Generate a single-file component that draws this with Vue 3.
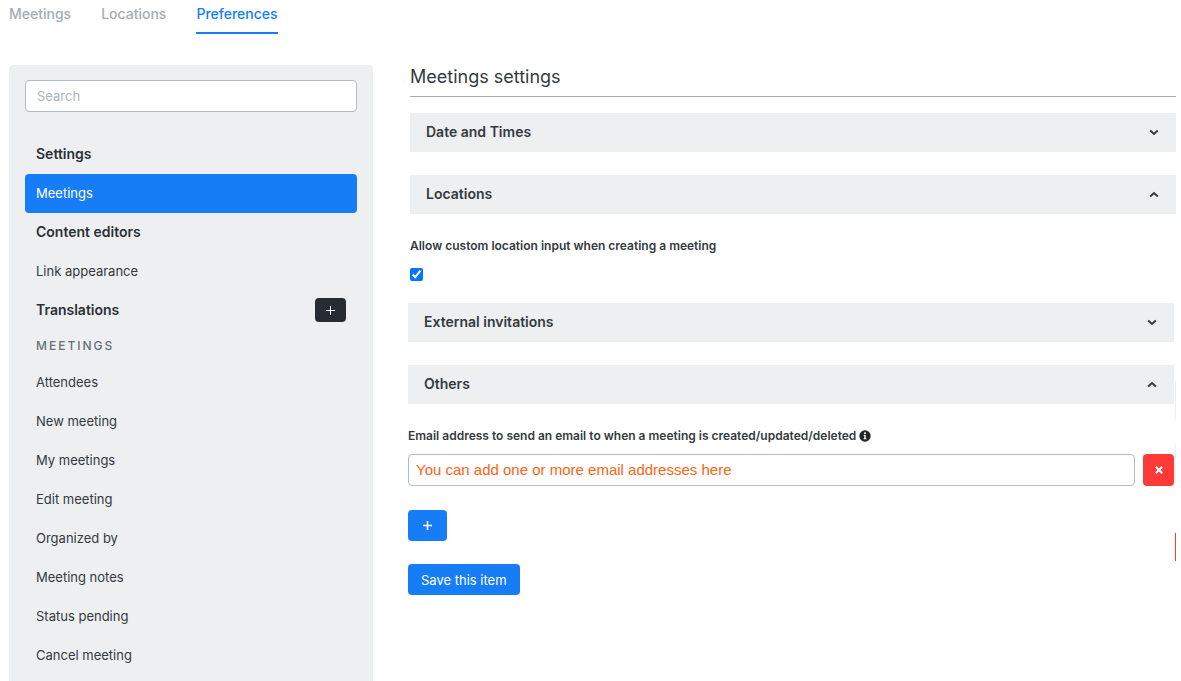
<script setup>
import { ref } from 'vue'

const tabs = ['Meetings', 'Locations', 'Preferences']
const activeTab = ref('Preferences')
const activeItem = ref('Meetings')
const search = ref('')
const allowCustom = ref(true)
const email = ref('You can add one or more email addresses here')
const open = ref({ dates: false, locations: true, external: false, others: true })

const menu = [
  { type: 'title', label: 'Settings' },
  { type: 'link', label: 'Meetings' },
  { type: 'title', label: 'Content editors' },
  { type: 'link', label: 'Link appearance' },
  { type: 'title', label: 'Translations', add: true },
  { type: 'caption', label: 'MEETINGS' },
  { type: 'link', label: 'Attendees' },
  { type: 'link', label: 'New meeting' },
  { type: 'link', label: 'My meetings' },
  { type: 'link', label: 'Edit meeting' },
  { type: 'link', label: 'Organized by' },
  { type: 'link', label: 'Meeting notes' },
  { type: 'link', label: 'Status pending' },
  { type: 'link', label: 'Cancel meeting' },
]
</script>

<template>
  <div class="page">
    <nav class="tabs">
      <a
        v-for="tab in tabs"
        :key="tab"
        href="#"
        :class="['tab', { active: tab === activeTab }]"
        @click.prevent="activeTab = tab"
      >{{ tab }}</a>
    </nav>

    <div class="columns">
      <aside class="sidebar">
        <input v-model="search" class="search" type="search" placeholder="Search" aria-label="Search">
        <div class="menu">
          <template v-for="item in menu" :key="item.type + item.label">
            <div v-if="item.type === 'title'" class="row title">
              <span>{{ item.label }}</span>
              <button v-if="item.add" class="add-small" type="button" aria-label="Add translation">
                <svg width="9" height="9" viewBox="0 0 9 9"><path d="M4.5 0v9M0 4.5h9" /></svg>
              </button>
            </div>
            <div v-else-if="item.type === 'caption'" class="caption">{{ item.label }}</div>
            <a
              v-else
              href="#"
              :class="['row', { selected: item.label === activeItem }]"
              @click.prevent="activeItem = item.label"
            >{{ item.label }}</a>
          </template>
        </div>
      </aside>

      <main class="content">
        <section class="upper">
          <h1>Meetings settings</h1>
          <button class="bar" type="button" :aria-expanded="open.dates" @click="open.dates = !open.dates">
            <span>Date and Times</span>
            <svg :class="['chevron', { up: open.dates }]" width="10" height="7" viewBox="0 0 10 7"><path d="M1.2 1.5L5 5l3.8-3.5" /></svg>
          </button>
          <button class="bar" type="button" :aria-expanded="open.locations" @click="open.locations = !open.locations">
            <span>Locations</span>
            <svg :class="['chevron', { up: open.locations }]" width="10" height="7" viewBox="0 0 10 7"><path d="M1.2 1.5L5 5l3.8-3.5" /></svg>
          </button>
          <div v-if="open.locations" class="option">
            <label for="custom-location">Allow custom location input when creating a meeting</label>
            <input id="custom-location" v-model="allowCustom" type="checkbox">
          </div>
        </section>

        <section class="lower">
          <button class="bar" type="button" :aria-expanded="open.external" @click="open.external = !open.external">
            <span>External invitations</span>
            <svg :class="['chevron', { up: open.external }]" width="10" height="7" viewBox="0 0 10 7"><path d="M1.2 1.5L5 5l3.8-3.5" /></svg>
          </button>
          <button class="bar" type="button" :aria-expanded="open.others" @click="open.others = !open.others">
            <span>Others</span>
            <svg :class="['chevron', { up: open.others }]" width="10" height="7" viewBox="0 0 10 7"><path d="M1.2 1.5L5 5l3.8-3.5" /></svg>
          </button>
          <div v-if="open.others" class="emails">
            <div class="email-label">
              <label for="email">Email address to send an email to when a meeting is created/updated/deleted</label>
              <svg class="info" width="12" height="12" viewBox="0 0 12 12">
                <circle cx="6" cy="6" r="5.7" fill="#22262b" />
                <circle cx="6" cy="3.2" r="1" fill="#fff" />
                <path d="M4.7 5h2v3.2h.7v1H4.6v-1h.7V6h-.6z" fill="#fff" />
              </svg>
            </div>
            <div class="email-row">
              <input id="email" v-model="email" class="email" type="text">
              <button class="remove" type="button" aria-label="Remove address">
                <svg width="8" height="8" viewBox="0 0 8 8"><path d="M.8.8l6.4 6.400M7.200.8L.8 7.200" /></svg>
              </button>
            </div>
            <button class="primary add" type="button" aria-label="Add address">
              <svg width="9" height="9" viewBox="0 0 9 9"><path d="M4.5 0v9M0 4.5h9" /></svg>
            </button>
          </div>
          <button class="primary save" type="button">Save this item</button>
        </section>
      </main>
    </div>

    <div class="edge" aria-hidden="true">
      <i class="mark"></i>
      <i class="mark"></i>
      <i class="mark red"></i>
    </div>
  </div>
</template>

<style>
body {
  margin: 0;
  background: #fff;
}
</style>

<style scoped>
.page,
.page * {
  box-sizing: border-box;
}

.page {
  position: relative;
  display: flex;
  flex-direction: column;
  min-height: 100vh;
  padding: 0 5px 0 9px;
  overflow: hidden;
  color: #343a40;
  font-family: Inter, "Liberation Sans", sans-serif;
  font-size: 13px;
  line-height: 20px;
}

button,
input {
  margin: 0;
  font: inherit;
}

a {
  color: inherit;
  text-decoration: none;
}

svg {
  display: block;
  fill: none;
  stroke: currentColor;
}

.tabs {
  display: flex;
  gap: 30px;
  height: 34px;
  font-size: 14px;
  font-weight: 500;
  color: #a4adb5;
}

.tab {
  padding-top: 4px;
}

.tab.active {
  border-bottom: 2px solid #167df7;
  color: #167df7;
}

.columns {
  display: flex;
  flex: 1;
  gap: 35px;
  margin-top: 31px;
}

.sidebar {
  flex: 0 0 364px;
  padding: 15px 16px 0;
  border-radius: 4px 4px 0 0;
  background: #edeff1;
}

.search {
  display: block;
  width: 100%;
  height: 32px;
  padding: 0 11px;
  border: 1px solid #b3bcc4;
  border-radius: 4px;
  background: #fff;
  outline: none;
  appearance: none;
}

.search::placeholder {
  color: #adb5bd;
  opacity: 1;
}

.menu {
  margin-top: 23px;
}

.row {
  display: flex;
  align-items: center;
  justify-content: space-between;
  height: 39px;
  padding: 0 11px 1px;
  border-radius: 4px;
}

.title {
  color: #2b3036;
  font-size: 14px;
  font-weight: 600;
}

.selected {
  background: #167df7;
  color: #fff;
}

.caption {
  height: 33px;
  padding: 0 11px;
  color: #66717b;
  font-size: 12px;
  font-weight: 500;
  letter-spacing: 2px;
  line-height: 32px;
}

.add-small {
  display: flex;
  align-items: center;
  justify-content: center;
  width: 31px;
  height: 24px;
  padding: 0;
  border: 0;
  border-radius: 4px;
  background: #272c33;
  color: #fff;
}

.content {
  flex: 1;
  min-width: 0;
}

.upper {
  margin-left: 2px;
}

.lower {
  margin-right: 2px;
}

h1 {
  height: 32px;
  margin: 0 0 16px;
  border-bottom: 1px solid #a4adb5;
  font-size: 18px;
  font-weight: 400;
  line-height: 24px;
}

.bar {
  display: flex;
  align-items: center;
  justify-content: space-between;
  width: 100%;
  height: 39px;
  margin-bottom: 23px;
  padding: 0 17px 1px 16px;
  border: 0;
  background: #edeff1;
  color: #343a40;
  font-size: 14px;
  font-weight: 600;
  text-align: left;
}

.chevron {
  stroke-width: 2;
}

.chevron.up {
  transform: rotate(180deg);
}

.option {
  padding-bottom: 22px;
}

.option label,
.email-label {
  font-size: 12px;
  font-weight: 600;
}

.option label {
  display: block;
  line-height: 18px;
}

.option input {
  display: block;
  width: 13px;
  height: 13px;
  margin-top: 13px;
  accent-color: #0075ff;
}

.email-label {
  display: flex;
  align-items: center;
  gap: 3px;
  height: 18px;
}

.info {
  stroke: none;
}

.email-row {
  display: flex;
  gap: 8px;
  margin-top: 9px;
}

.email {
  flex: 1;
  min-width: 0;
  height: 32px;
  padding: 0 7px 1px;
  border: 1px solid #b3bcc4;
  border-radius: 4px;
  background: #fff;
  color: #fb6514;
  font-family: "Liberation Sans", Arial, sans-serif;
  font-size: 15px;
  outline: none;
}

.remove {
  display: flex;
  align-items: center;
  justify-content: center;
  width: 31px;
  height: 32px;
  padding: 0;
  border: 0;
  border-radius: 4px;
  background: #fd3a37;
  color: #fff;
  stroke-width: 2;
}

.primary {
  display: block;
  height: 31px;
  border: 0;
  border-radius: 4px;
  background: #167df7;
  color: #fff;
}

.add {
  width: 39px;
  margin-top: 24px;
  padding: 0 15px;
  stroke-width: 1.5;
}

.save {
  margin-top: 23px;
  padding: 0 13px;
}

.edge {
  position: absolute;
  top: 381px;
  right: 5px;
  display: flex;
  flex-direction: column;
  gap: 24px;
  width: 1px;
}

.mark {
  height: 39px;
  background: #edeff1;
}

.mark.red {
  height: 28px;
  margin-top: 26px;
  background: #fd3a37;
}
</style>
